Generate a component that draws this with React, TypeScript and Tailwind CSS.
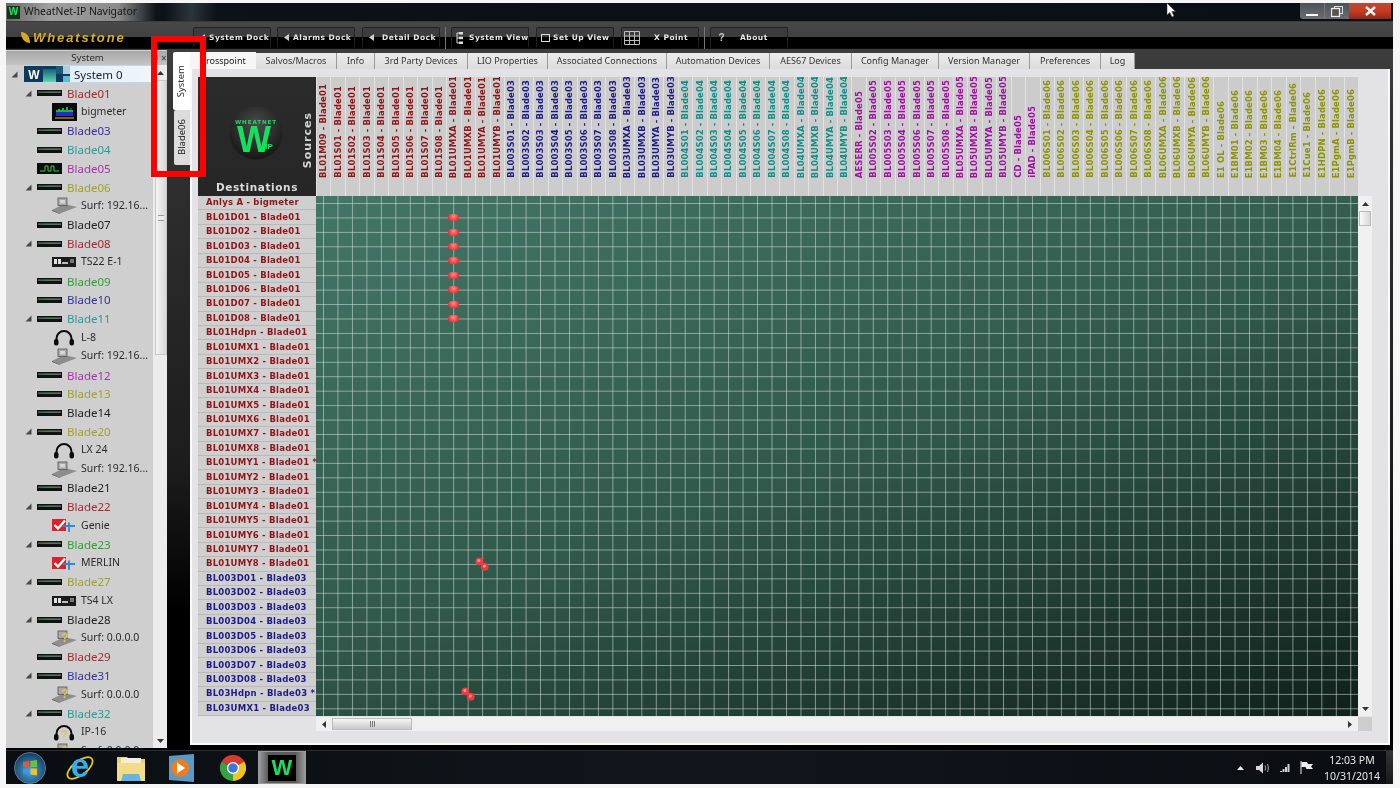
import React from "react";

const RED = "text-[#8f1418]";
const BLUE = "text-[#1c1a86]";
const TEAL = "text-[#0f8f88]";
const PURPLE = "text-[#a010a0]";
const OLIVE = "text-[#8c9400]";

const S8 = ["S01", "S02", "S03", "S04", "S05", "S06", "S07", "S08"];
const UM = ["UMXA", "UMXB", "UMYA", "UMYB"];
const sources: [string, string][] = [
  ["BL01M09 - Blade01", RED],
  ...S8.map((s): [string, string] => [`BL01${s} - Blade01`, RED]),
  ...UM.map((s): [string, string] => [`BL01${s} - Blade01`, RED]),
  ...S8.map((s): [string, string] => [`BL003${s} - Blade03`, BLUE]),
  ...UM.map((s): [string, string] => [`BL03${s} - Blade03`, BLUE]),
  ...S8.map((s): [string, string] => [`BL004${s} - Blade04`, TEAL]),
  ...UM.map((s): [string, string] => [`BL04${s} - Blade04`, TEAL]),
  ["AESERR - Blade05", PURPLE],
  ...["S02", "S03", "S04", "S06", "S07", "S08"].map((s): [string, string] => [`BL005${s} - Blade05`, PURPLE]),
  ...UM.map((s): [string, string] => [`BL05${s} - Blade05`, PURPLE]),
  ["CD - Blade05", PURPLE],
  ["iPAD - Blade05", PURPLE],
  ...S8.map((s): [string, string] => [`BL006${s} - Blade06`, OLIVE]),
  ...UM.map((s): [string, string] => [`BL06${s} - Blade06`, OLIVE]),
  ...["E1 OL", "E1BM01", "E1BM02", "E1BM03", "E1BM04", "E1CtrlRm", "E1Cue1", "E1HDPN", "E1PgmA", "E1PgmB"].map(
    (s): [string, string] => [`${s} - Blade06`, OLIVE]
  ),
];

const N8 = [1, 2, 3, 4, 5, 6, 7, 8];
const dests: [string, string][] = [
  ["Anlys A - bigmeter", RED],
  ...N8.map((n): [string, string] => [`BL01D0${n} - Blade01`, RED]),
  ["BL01Hdpn - Blade01", RED],
  ...N8.map((n): [string, string] => [`BL01UMX${n} - Blade01`, RED]),
  ...N8.map((n): [string, string] => [`BL01UMY${n} - Blade01${n === 1 ? " *" : ""}`, RED]),
  ...N8.map((n): [string, string] => [`BL003D0${n} - Blade03`, BLUE]),
  ["BL03Hdpn - Blade03 *", BLUE],
  ["BL03UMX1 - Blade03", BLUE],
];

type Ico = "bar" | "wave" | "meter" | "surf" | "ts" | "phones" | "genie" | "unk" | "unkphones";
type TreeRow = { label: string; color?: string; exp?: boolean; child?: boolean; icon: Ico };

const TR = "text-[#a32a2e]";
const TB = "text-[#35309c]";
const TT = "text-[#2a9a94]";
const TP = "text-[#a632a8]";
const TO = "text-[#a0a030]";
const TG = "text-[#2f9e34]";
const TK = "text-[#222222]";

const tree: TreeRow[] = [
  { label: "Blade01", color: TR, exp: true, icon: "bar" },
  { label: "bigmeter", child: true, icon: "meter" },
  { label: "Blade03", color: TB, icon: "bar" },
  { label: "Blade04", color: TT, icon: "bar" },
  { label: "Blade05", color: TP, icon: "wave" },
  { label: "Blade06", color: TO, exp: true, icon: "bar" },
  { label: "Surf: 192.16...", child: true, icon: "surf" },
  { label: "Blade07", color: TK, icon: "bar" },
  { label: "Blade08", color: TR, exp: true, icon: "bar" },
  { label: "TS22 E-1", child: true, icon: "ts" },
  { label: "Blade09", color: TG, icon: "bar" },
  { label: "Blade10", color: TB, icon: "bar" },
  { label: "Blade11", color: TT, exp: true, icon: "bar" },
  { label: "L-8", child: true, icon: "phones" },
  { label: "Surf: 192.16...", child: true, icon: "surf" },
  { label: "Blade12", color: TP, icon: "bar" },
  { label: "Blade13", color: TO, icon: "bar" },
  { label: "Blade14", color: TK, icon: "bar" },
  { label: "Blade20", color: TO, exp: true, icon: "bar" },
  { label: "LX 24", child: true, icon: "phones" },
  { label: "Surf: 192.16...", child: true, icon: "surf" },
  { label: "Blade21", color: TK, icon: "bar" },
  { label: "Blade22", color: TR, exp: true, icon: "bar" },
  { label: "Genie", child: true, icon: "genie" },
  { label: "Blade23", color: TG, exp: true, icon: "bar" },
  { label: "MERLIN", child: true, icon: "genie" },
  { label: "Blade27", color: TO, exp: true, icon: "bar" },
  { label: "TS4 LX", child: true, icon: "ts" },
  { label: "Blade28", color: TK, exp: true, icon: "bar" },
  { label: "Surf: 0.0.0.0", child: true, icon: "unk" },
  { label: "Blade29", color: TR, icon: "bar" },
  { label: "Blade31", color: TB, exp: true, icon: "bar" },
  { label: "Surf: 0.0.0.0", child: true, icon: "unk" },
  { label: "Blade32", color: TT, exp: true, icon: "bar" },
  { label: "IP-16", child: true, icon: "unkphones" },
  { label: "Surf: 0.0.0.0", child: true, icon: "unk" },
];

const Expander = () => (
  <svg width="7" height="7" viewBox="0 0 7 7" className="shrink-0">
    <polygon points="0.5,6.5 6.5,6.5 6.5,0.5" fill="#4a4a4a" />
  </svg>
);

function TreeIcon({ kind }: { kind: Ico }) {
  if (kind === "bar")
    return (
      <svg width="25" height="6" viewBox="0 0 25 6" className="shrink-0">
        <defs>
          <linearGradient id="barg" x1="0" x2="1" y1="0" y2="0">
            <stop offset="0" stopColor="#666" />
            <stop offset="0.5" stopColor="#4f9a68" />
            <stop offset="1" stopColor="#777" />
          </linearGradient>
        </defs>
        <rect x="0" y="0" width="25" height="6" fill="#111" />
        <rect x="1" y="1.5" width="23" height="1.3" fill="url(#barg)" />
      </svg>
    );
  if (kind === "wave")
    return (
      <svg width="25" height="11" viewBox="0 0 25 11" className="shrink-0">
        <rect width="25" height="11" fill="#0b0f0b" />
        <path d="M3 8H8V3H11V8H14V3H17V8H22" fill="none" stroke="#38c850" strokeWidth="1" />
      </svg>
    );
  if (kind === "meter")
    return (
      <svg width="25" height="18" viewBox="0 0 25 18" className="shrink-0">
        <rect width="25" height="18" fill="#0a0a0a" />
        <path d="M4 13V9L6 9V6L8 6V9H10V5H12V8H14V4H16V7H18V5H20V9H21V13Z" fill="#2a2ac8" />
        <path d="M4 9H21V7H16V4H14V7H12V5H10V7H8V6H6V7H4Z" fill="#22b040" />
        <rect x="3" y="14.5" width="19" height="1" fill="#d8c020" />
      </svg>
    );
  if (kind === "ts")
    return (
      <svg width="24" height="10" viewBox="0 0 24 10" className="shrink-0">
        <rect width="24" height="10" fill="#1b1b1b" />
        <rect x="2" y="2" width="3" height="5" fill="#e2e2e2" />
        <rect x="6" y="2" width="3" height="5" fill="#e2e2e2" />
        <rect x="10" y="5" width="6" height="2" fill="#bbb" />
        <rect x="18" y="2" width="4" height="4" fill="#777" />
      </svg>
    );
  if (kind === "phones" || kind === "unkphones")
    return (
      <svg width="24" height="17" viewBox="0 0 24 17" className="shrink-0">
        <path d="M4.5 12V9.5a7.5 7.5 0 0 1 15 0V12" fill="none" stroke="#0c0c0c" strokeWidth="2" />
        <rect x="2" y="10" width="4.5" height="6.5" rx="2" fill="#0c0c0c" />
        <rect x="17.5" y="10" width="4.5" height="6.5" rx="2" fill="#0c0c0c" />
        {kind === "unkphones" && (
          <text x="12" y="14" fontSize="11" fontWeight="700" fontFamily="Liberation Sans, sans-serif" textAnchor="middle" fill="#d8c84a">
            ?
          </text>
        )}
      </svg>
    );
  if (kind === "genie")
    return (
      <svg width="24" height="15" viewBox="0 0 24 15" className="shrink-0">
        <rect x="0" y="1" width="14" height="12" fill="#d8222c" />
        <path d="M2.5 7L6 10.5L13 2.5" fill="none" stroke="#fff" strokeWidth="2.4" />
        <path d="M11 8H23M17 4.5V14" stroke="#2c8ad0" strokeWidth="1.8" />
      </svg>
    );
  const unk = kind === "unk";
  return (
    <svg width="25" height="17" viewBox="0 0 25 17" className="shrink-0">
      <polygon points="0,13 12,7 25,10 8,16.5" fill="#8d8d8d" />
      <polygon points="0,13 8,16.5 8,17 0,14" fill="#555" />
      <rect x="6" y="1" width="9" height="7.5" fill="#a9a9a9" stroke="#555" strokeWidth="0.8" />
      {unk ? (
        <text x="13" y="12" fontSize="12" fontWeight="700" fontFamily="Liberation Sans, sans-serif" textAnchor="middle" fill="#d8c84a">
          ?
        </text>
      ) : (
        <rect x="8" y="3" width="5" height="3.5" fill="#d6d6d6" />
      )}
    </svg>
  );
}

function ToolBtn({ label, w, pl, icon }: { label: string; w: string; pl: string; icon: React.ReactNode }) {
  return (
    <div className={`h-[20px] shrink-0 rounded-t-[2px] border border-b-0 border-[#232323] bg-[linear-gradient(#3c3c3c_0%,#3c3c3c_50%,#000_50%)] flex items-center relative ${w}`}>
      <div className="w-[14px] ml-[1px] flex justify-center shrink-0">{icon}</div>
      <span className={`font-['DejaVu_Sans'] font-bold text-[7.5px] tracking-[0.5px] text-[#e6e6e6] whitespace-nowrap ${pl}`}>{label}</span>
    </div>
  );
}

const LeftTri = () => (
  <svg width="5" height="7" viewBox="0 0 5 7">
    <polygon points="0,3.5 5,0 5,7" fill="#cfcfcf" />
  </svg>
);

const tabs: [string, string][] = [
  ["Salvos/Macros", "w-[81px]"],
  ["Info", "w-[38px]"],
  ["3rd Party Devices", "w-[93px]"],
  ["LIO Properties", "w-[80px]"],
  ["Associated Connections", "w-[119px]"],
  ["Automation Devices", "w-[103px]"],
  ["AES67 Devices", "w-[82px]"],
  ["Config Manager", "w-[87px]"],
  ["Version Manager", "w-[91px]"],
  ["Preferences", "w-[71px]"],
  ["Log", "w-[34px]"],
];

const Pin = ({ cls }: { cls: string }) => (
  <div className={`h-[7px] w-[11px] rounded-full bg-[radial-gradient(circle_at_50%_35%,#ff9090,#f23a40_60%,#d8262e)] place-self-center ${cls}`} />
);

const PinDiag = ({ cls }: { cls: string }) => (
  <svg width="14" height="14" viewBox="0 0 14 14" className={`place-self-center ${cls}`}>
    <circle cx="4.3" cy="4.3" r="3.9" fill="#ee3a40" />
    <circle cx="9.7" cy="9.7" r="3.9" fill="#ee3a40" />
    <circle cx="3.9" cy="3.5" r="1.5" fill="#ff9a9a" />
    <circle cx="9.3" cy="8.9" r="1.5" fill="#ff9a9a" />
  </svg>
);

export default function App() {
  return (
    <div className="relative w-[1400px] h-[788px] overflow-hidden bg-[#f6f6f6] pl-[6px] pr-[7px] pt-[3px] pb-[4px] flex flex-col font-['Noto_Sans',sans-serif] blur-[0.35px]">
      {/* Title bar */}
      <div className="h-[18px] shrink-0 flex items-center bg-[linear-gradient(90deg,#0e1318,#0c1016_40%,#0a0f16)] relative">
        <div className="h-full w-[150px] flex items-center bg-[linear-gradient(90deg,#6a6a6a,#a0a0a0_30%,#8a8a8a_75%,#0e1318)]">
          <div className="w-[13px] h-[13px] ml-[1px] bg-[#17301f] flex items-center justify-center">
            <span className="text-[#22e060] text-[10px] font-bold leading-none font-['Liberation_Sans']">W</span>
          </div>
          <span className="ml-[4px] text-[10.4px] text-[#161616] whitespace-nowrap font-['Noto_Sans']">WheatNet-IP Navigator</span>
        </div>
        <div className="w-[50px] h-full ml-[10px] bg-[linear-gradient(90deg,#0e1318,#2c343c,#0e1318)]" />
        <div className="flex-1" />
        <div className="flex h-[17px] items-start self-start mr-[2px]">
          <div className="w-[24px] h-[16px] rounded-bl-[3px] bg-[linear-gradient(#4c5258,#6a6e72)] flex items-end justify-center pb-[3px]">
            <div className="w-[12px] h-[2.5px] bg-white" />
          </div>
          <div className="w-[25px] h-[16px] bg-[linear-gradient(#4c5258,#6a6e72)] flex items-center justify-center border-l border-[#777]">
            <svg width="12" height="11" viewBox="0 0 12 11">
              <rect x="3.5" y="0.5" width="8" height="7" fill="none" stroke="#ddd" />
              <rect x="0.5" y="2.5" width="8" height="8" fill="#555" stroke="#eee" strokeWidth="1.3" />
            </svg>
          </div>
          <div className="w-[42px] h-[16px] bg-[linear-gradient(#b84a38,#c83a20_50%,#8e2a1c)] flex items-center justify-center">
            <svg width="11" height="10" viewBox="0 0 11 10">
              <path d="M1 1L10 9M10 1L1 9" stroke="#f4f4f4" strokeWidth="2.4" />
            </svg>
          </div>
        </div>
      </div>

      {/* Toolbar */}
      <div className="h-[29px] shrink-0 bg-[linear-gradient(#303030_0%,#484848_4%,#414141_55%,#000_55%,#000_94%,#555_100%)] flex items-start pt-[6px]">
        <div className="w-[187px] shrink-0 flex items-center pl-[14px] pt-[1px]">
          <svg width="11" height="13" viewBox="0 0 11 13">
            <path d="M1 1C6 1 10 5 10 12C5 12 1 8 1 1Z" fill="#d8a820" />
          </svg>
          <span className="ml-[2px] text-[#d8ac28] italic font-bold text-[13px] tracking-[1.9px] font-['Liberation_Sans'] whitespace-nowrap">Wheatstone</span>
        </div>
        <div className="flex">
          <ToolBtn label="System Dock" w="w-[78px]" pl="ml-[0px]" icon={<LeftTri />} />
          <div className="w-[6px]" />
          <ToolBtn label="Alarms Dock" w="w-[78px]" pl="ml-[0px]" icon={<LeftTri />} />
          <div className="w-[7px]" />
          <ToolBtn label="Detail Dock" w="w-[78px]" pl="ml-[4px]" icon={<LeftTri />} />
          <div className="w-[11px] flex justify-center"><div className="w-[1px] h-[22px] bg-[#777]" /></div>
          <ToolBtn
            label="System View"
            w="w-[78px]"
            pl="ml-[2px]"
            icon={
              <svg width="8" height="12" viewBox="0 0 8 12">
                <path d="M3 1H1V11H3M1 6H3" fill="none" stroke="#ddd" />
                <rect x="3" y="0" width="4" height="2.5" fill="#ddd" />
                <rect x="3" y="4.7" width="4" height="2.5" fill="#ddd" />
                <rect x="3" y="9.5" width="4" height="2.5" fill="#ddd" />
              </svg>
            }
          />
          <div className="w-[7px]" />
          <ToolBtn
            label="Set Up View"
            w="w-[78px]"
            pl="ml-[1px]"
            icon={
              <svg width="9" height="8" viewBox="0 0 9 8">
                <rect x="0.5" y="0.5" width="8" height="7" fill="none" stroke="#ddd" />
              </svg>
            }
          />
          <div className="w-[7px]" />
          <ToolBtn
            label="X Point"
            w="w-[78px]"
            pl="ml-[17px]"
            icon={
              <svg width="16" height="14" viewBox="0 0 16 14" className="ml-[4px] shrink-0">
                <path d="M.5.5H15.5V13.5H.5ZM5.5.5V13.5M10.5.5V13.5M.5 5H15.5M.5 9.5H15.5" fill="none" stroke="#bdbdbd" />
              </svg>
            }
          />
          <div className="w-[11px] flex justify-center"><div className="w-[1px] h-[22px] bg-[#777]" /></div>
          <ToolBtn
            label="About"
            w="w-[78px]"
            pl="ml-[14px]"
            icon={<span className="text-[#ccc] text-[10px] font-bold leading-none ml-[5px] font-['Liberation_Sans']">?</span>}
          />
        </div>
      </div>

      {/* Main */}
      <div className="h-[700px] shrink-0 flex bg-[linear-gradient(#3e3e3e_0%,#333_8%,#1c1c1c_60%,#000_80%)]">
        {/* Left panel */}
        <div className="w-[161px] shrink-0 h-[698px] bg-[#cfcfcf] flex flex-col overflow-hidden">
          <div className="h-[14px] mt-[1px] shrink-0 bg-[linear-gradient(#a8a8a8,#c4c4c4)] flex items-center relative">
            <span className="w-[147px] pl-[16px] text-center text-[9.5px] text-[#2a2a2a]">System</span>
            <svg width="7" height="7" viewBox="0 0 7 7" className="-ml-[2px]">
              <rect x="1" y="0.5" width="5" height="4" fill="none" stroke="#444" />
              <path d="M3.5 5V7" stroke="#444" />
            </svg>
            <span className="ml-[3px] text-[10px] leading-none text-[#333]">×</span>
          </div>
          <div className="flex flex-1 min-h-0">
            <div className="w-[147px] shrink-0 overflow-hidden">
              <div className="h-[18.8px] flex items-center">
                <div className="ml-[5px] mr-[5px]"><Expander /></div>
                <div className="flex-1 h-[18px] flex items-center border border-[#bcd8ea] bg-[linear-gradient(90deg,#d8ecfa,#e8f2fa_60%,#eef5fb)]">
                  <svg width="46" height="16" viewBox="0 0 46 16" className="shrink-0">
                    <defs>
                      <linearGradient id="sg" x1="0" x2="0" y1="0" y2="1">
                        <stop offset="0" stopColor="#1a5f80" />
                        <stop offset="1" stopColor="#58d8a8" />
                      </linearGradient>
                    </defs>
                    <rect width="46" height="16" fill="#0d3a5c" />
                    <text x="10" y="12.5" fontSize="12" fontWeight="700" fontFamily="Liberation Sans, sans-serif" textAnchor="middle" fill="#fff">
                      W
                    </text>
                    <rect x="19" y="3" width="13" height="13" fill="url(#sg)" />
                    <rect x="32" y="0" width="7" height="8" fill="#1c5a78" />
                    <rect x="39" y="0" width="7" height="8" fill="#b0cede" />
                    <rect x="39" y="10" width="7" height="6" fill="#5cbcd4" />
                  </svg>
                  <span className="ml-[4px] text-[11.5px] text-[#222] whitespace-nowrap">System 0</span>
                </div>
              </div>
              {tree.map((r, i) => (
                <div key={i} className="h-[18.8px] flex items-center whitespace-nowrap">
                  {r.child ? (
                    <>
                      <div className="w-[46px] shrink-0" />
                      <div className="w-[24px] shrink-0 flex justify-center"><TreeIcon kind={r.icon} /></div>
                      <span className="ml-[5px] text-[10.5px] text-[#2a2a2a]">{r.label}</span>
                    </>
                  ) : (
                    <>
                      <div className="w-[19px] shrink-0" />
                      <div className="w-[8px] shrink-0">{r.exp && <Expander />}</div>
                      <div className="w-[4px] shrink-0" />
                      <TreeIcon kind={r.icon} />
                      <span className={`ml-[5px] text-[11.5px] ${r.color}`}>{r.label}</span>
                    </>
                  )}
                </div>
              ))}
            </div>
            <div className="w-[14px] shrink-0 bg-[#ececec] flex flex-col items-center">
              <div className="h-[15px] flex items-center">
                <svg width="7" height="4" viewBox="0 0 7 4"><polygon points="3.5,0 7,4 0,4" fill="#333" /></svg>
              </div>
              <div className="w-[12px] h-[275px] ml-[1px] bg-[linear-gradient(90deg,#f4f4f4,#d8d8d8)] border border-[#c8c8c8] flex items-center justify-center">
                <div className="w-[6px] h-[6px] border-y border-[#999] bg-[linear-gradient(#ececec_40%,#999_40%,#999_60%,#ececec_60%)]" />
              </div>
              <div className="flex-1" />
              <div className="h-[14px] flex items-center">
                <svg width="7" height="4" viewBox="0 0 7 4"><polygon points="3.5,4 7,0 0,0" fill="#333" /></svg>
              </div>
            </div>
          </div>
        </div>

        {/* Vertical doc tabs */}
        <div className="w-[23px] shrink-0 flex flex-col items-end pt-[2px]">
          <div className="h-[58px] w-[17px] bg-white rounded-l-[2px] flex items-center justify-center">
            <span className="[writing-mode:vertical-rl] rotate-180 text-[9.5px] text-[#333] whitespace-nowrap">System</span>
          </div>
          <div className="h-[55px] w-[16px] bg-[#dcdcdc] rounded-l-[2px] flex items-center justify-center">
            <span className="[writing-mode:vertical-rl] rotate-180 text-[9.5px] text-[#222] whitespace-nowrap">Blade06</span>
          </div>
        </div>

        {/* Content */}
        <div className="flex-1 min-w-0 flex flex-col pr-[3px] pb-[5px] pt-[2px]">
          <div className="flex h-[17px] shrink-0">
            <div className="w-[66px] h-[17px] bg-[#f6f6f6] flex items-center justify-center text-[9px] text-[#222]">Crosspoint</div>
            {tabs.map(([t, w]) => (
              <div key={t} className={`${w} h-[16px] mt-[1px] shrink-0 bg-[linear-gradient(#ececec,#dcdcdc)] border-r border-[#9a9a9a] flex items-center justify-center text-[9px] text-[#333] whitespace-nowrap`}>
                {t}
              </div>
            ))}
          </div>
          <div className="flex-1 bg-[#e3e3e6] border-x-2 border-b-2 border-[#fafafa] pl-[6px] pt-[8px] flex flex-col">
            {/* Header row */}
            <div className="flex h-[119px] shrink-0">
              <div className="w-[118px] shrink-0 bg-[linear-gradient(#2b2b2b,#262626)] flex flex-col">
                <div className="flex-1 flex min-h-0">
                  <div className="flex-1 flex items-center justify-center pt-[10px] pl-[14px]">
                    <svg width="54" height="54" viewBox="0 0 54 54">
                      <defs>
                        <radialGradient id="lg" cx="0.5" cy="0.35" r="0.7">
                          <stop offset="0" stopColor="#4c4c4c" />
                          <stop offset="1" stopColor="#131313" />
                        </radialGradient>
                      </defs>
                      <circle cx="27" cy="27" r="26.5" fill="url(#lg)" />
                      <text x="27" y="18" fontSize="5.6" fontWeight="700" letterSpacing="0.9" fontFamily="DejaVu Sans, sans-serif" textAnchor="middle" fill="#14e060">
                        WHEATNET
                      </text>
                      <text x="25" y="45.5" fontSize="36" fontWeight="700" fontFamily="Liberation Sans, sans-serif" textAnchor="middle" fill="#14e060">
                        W
                      </text>
                      <text x="40" y="43" fontSize="8" fontWeight="700" fontFamily="Liberation Sans, sans-serif" textAnchor="middle" fill="#14e060">
                        IP
                      </text>
                    </svg>
                  </div>
                  <div className="w-[16px] shrink-0 flex items-end justify-start pb-[11px]">
                    <span className="[writing-mode:vertical-rl] rotate-180 font-['DejaVu_Sans'] font-bold text-[11px] tracking-[1px] text-[#d4d4d4] whitespace-nowrap">Sources</span>
                  </div>
                </div>
                <div className="h-[17px] shrink-0 flex items-center justify-center font-['DejaVu_Sans'] font-bold text-[10.5px] tracking-[0.6px] text-[#dcdcdc]">Destinations</div>
              </div>
              <div className="w-[1042px] shrink-0 grid grid-cols-[repeat(72,minmax(0,1fr))] bg-[#cccccc]">
                {sources.map(([t, c], i) => (
                  <div key={i} className="overflow-hidden border-l border-[#e2e2e2] flex items-end justify-center pb-[18px]">
                    <span className={`[writing-mode:vertical-rl] rotate-180 whitespace-nowrap font-['DejaVu_Sans'] font-bold text-[8.5px] leading-[11px] tracking-[0.1px] ${c}`}>{t}</span>
                  </div>
                ))}
              </div>
            </div>

            {/* Body row */}
            <div className="flex h-[520px] shrink-0">
              <div className="w-[118px] shrink-0 grid grid-rows-[repeat(36,minmax(0,1fr))] bg-[#cfcfcf]">
                {dests.map(([t, c], i) => (
                  <div key={i} className={`border-b border-[#b9b9b9] pl-[8px] flex items-center whitespace-nowrap overflow-hidden font-['DejaVu_Sans'] font-bold text-[8.5px] tracking-[0.22px] ${c}`}>{t}</div>
                ))}
              </div>
              <div className="w-[1042px] shrink-0 grid grid-cols-[repeat(72,minmax(0,1fr))] grid-rows-[repeat(36,minmax(0,1fr))] [background-image:linear-gradient(90deg,rgba(215,228,222,0.55)_1px,transparent_1px),linear-gradient(rgba(215,228,222,0.55)_1px,transparent_1px),linear-gradient(160deg,#437666_0%,#31594b_50%,#10201b_100%)] [background-size:14.472px_14.444px,14.472px_14.444px,100%_100%] [background-position:7px_0,0_7px,0_0]">
                <Pin cls="col-start-10 row-start-2" />
                <Pin cls="col-start-10 row-start-3" />
                <Pin cls="col-start-10 row-start-4" />
                <Pin cls="col-start-10 row-start-5" />
                <Pin cls="col-start-10 row-start-6" />
                <Pin cls="col-start-10 row-start-7" />
                <Pin cls="col-start-10 row-start-8" />
                <Pin cls="col-start-10 row-start-9" />
                <PinDiag cls="col-start-12 row-start-[26]" />
                <PinDiag cls="col-start-11 row-start-[35]" />
              </div>
              <div className="w-[14px] shrink-0 bg-[#f0f0f0] flex flex-col items-center">
                <div className="h-[15px] flex items-center">
                  <svg width="7" height="4" viewBox="0 0 7 4"><polygon points="3.5,0 7,4 0,4" fill="#333" /></svg>
                </div>
                <div className="w-[12px] h-[15px] bg-[linear-gradient(90deg,#fafafa,#d6d6d6)] border border-[#bbb]" />
                <div className="flex-1" />
                <div className="h-[14px] flex items-center">
                  <svg width="7" height="4" viewBox="0 0 7 4"><polygon points="3.5,4 7,0 0,0" fill="#333" /></svg>
                </div>
              </div>
            </div>

            {/* Horizontal scrollbar */}
            <div className="flex h-[14px] mt-[1px] shrink-0">
              <div className="w-[118px] shrink-0" />
              <div className="w-[1042px] shrink-0 bg-[#f0f0f0] flex items-center">
                <div className="w-[16px] flex justify-center">
                  <svg width="4" height="7" viewBox="0 0 4 7"><polygon points="0,3.5 4,0 4,7" fill="#333" /></svg>
                </div>
                <div className="w-[80px] h-[12px] bg-[linear-gradient(#f6f6f6,#c8c8c8)] border border-[#bbb] flex items-center justify-center gap-[1px]">
                  <div className="w-[1px] h-[6px] bg-[#777]" />
                  <div className="w-[1px] h-[6px] bg-[#777]" />
                  <div className="w-[1px] h-[6px] bg-[#777]" />
                </div>
                <div className="flex-1" />
                <div className="w-[16px] flex justify-center">
                  <svg width="4" height="7" viewBox="0 0 4 7"><polygon points="4,3.5 0,0 0,7" fill="#333" /></svg>
                </div>
              </div>
              <div className="w-[14px] shrink-0 bg-[#cdcdcd]" />
            </div>
          </div>
        </div>
      </div>

      {/* Taskbar */}
      <div className="h-[34px] shrink-0 bg-[linear-gradient(90deg,#0a0e12,#11161c_50%,#0a0e13)] border-t border-[#2a2e33] flex items-center">
        <div className="w-[48px] flex justify-center">
          <svg width="32" height="32" viewBox="0 0 32 32">
            <defs>
              <radialGradient id="orb" cx="0.5" cy="0.6" r="0.6">
                <stop offset="0" stopColor="#4aa8dc" />
                <stop offset="1" stopColor="#123a60" />
              </radialGradient>
            </defs>
            <circle cx="16" cy="16" r="15.5" fill="url(#orb)" stroke="#7a8a98" strokeWidth="0.8" />
            <path d="M9 10L15 9V15H9Z" fill="#e05a30" />
            <path d="M16.5 9L23 8V15H16.5Z" fill="#70c040" />
            <path d="M9 16.5H15V22.5L9 21.5Z" fill="#3a98e0" />
            <path d="M16.5 16.5H23V23.5L16.5 22.5Z" fill="#f0c030" />
          </svg>
        </div>
        <div className="w-[52px] flex justify-center">
          <svg width="30" height="30" viewBox="0 0 30 30">
            <ellipse cx="15" cy="15" rx="15" ry="7" transform="rotate(-38 15 15)" fill="none" stroke="#e6c820" strokeWidth="1.8" />
            <text x="15" y="24" fontSize="33" fontWeight="700" fontFamily="Liberation Sans, sans-serif" textAnchor="middle" fill="#2eb0ec">
              e
            </text>
          </svg>
        </div>
        <div className="w-[50px] flex justify-center">
          <svg width="30" height="28" viewBox="0 0 30 28">
            <path d="M1 3H11L13 5H29V27H1Z" fill="#e8cf78" />
            <rect x="5" y="4" width="20" height="6" fill="#f4efd8" />
            <path d="M1 9H29V25Q29 27 27 27H3Q1 27 1 25Z" fill="#f2dc8c" />
            <path d="M7 20H23L25 27H5Z" fill="#6ab4e0" />
          </svg>
        </div>
        <div className="w-[51px] flex justify-center">
          <svg width="25" height="28" viewBox="0 0 25 28">
            <polygon points="0,2 25,0 25,28 0,26" fill="#5a9ac8" />
            <circle cx="11" cy="14" r="9" fill="#ee7d1e" />
            <polygon points="8,8.5 16,14 8,19.5" fill="#fff" />
          </svg>
        </div>
        <div className="w-[51px] flex justify-center">
          <svg width="26" height="26" viewBox="0 0 24 24">
            <path d="M12 12L1.6 6A12 12 0 0 1 22.4 6Z" fill="#d83a30" />
            <path d="M12 12L22.4 6A12 12 0 0 1 12 24Z" fill="#f2c420" />
            <path d="M12 12L12 24A12 12 0 0 1 1.6 6Z" fill="#3aa044" />
            <circle cx="12" cy="12" r="5.6" fill="#fff" />
            <circle cx="12" cy="12" r="4.4" fill="#3d78d8" />
          </svg>
        </div>
        <div className="w-[48px] h-[33px] bg-[linear-gradient(90deg,#9a9a9a,#5c5c5c_20%,#5c5c5c_80%,#9a9a9a)] border border-[#9a9a9a] flex items-center justify-center">
          <div className="w-[28px] h-[26px] bg-black flex items-center justify-center">
            <span className="text-[#14e060] text-[22px] font-bold leading-none font-['Liberation_Sans']">W</span>
          </div>
        </div>
        <div className="flex-1" />
        <div className="flex items-center">
          <svg width="7" height="4" viewBox="0 0 7 4"><polygon points="3.5,0 7,4 0,4" fill="#eee" /></svg>
          <svg width="15" height="12" viewBox="0 0 15 12" className="ml-[12px]">
            <path d="M0 4H3L7 0.5V11.5L3 8H0Z" fill="#d8d8d8" />
            <path d="M9 3.5Q10.5 6 9 8.5M11.5 2Q13.5 6 11.5 10" fill="none" stroke="#aaa" />
          </svg>
          <svg width="10" height="9" viewBox="0 0 10 9" className="ml-[9px]">
            <path d="M0 8H2V9H0ZM2.5 6H4.5V9H2.5ZM5 4H7V9H5ZM7.5 1H9.5V9H7.5Z" fill="#cfcfcf" />
          </svg>
          <svg width="13" height="13" viewBox="0 0 13 13" className="ml-[10px]">
            <path d="M1 0V13" stroke="#eee" />
            <path d="M1.5 1H7L8 3H13L11 5.5L13 8H6.5L5.5 6H1.5Z" fill="#eee" />
          </svg>
          <div className="w-[56px] ml-[11px] mr-[6px] text-center text-[10.5px] leading-[16px] text-[#e8e8e8] whitespace-nowrap">
            <div>12:03 PM</div>
            <div>10/31/2014</div>
          </div>
        </div>
        <div className="w-[7px] h-full bg-[linear-gradient(#333,#16191d)]" />
      </div>

      {/* Red annotation rectangle */}
      <div className="absolute left-[151px] top-[36px] w-[55px] h-[141px] border-[6px] border-[#ff0000]" />
      {/* Mouse pointer */}
      <svg width="10" height="15" viewBox="0 0 10 15" className="absolute left-[1166px] top-[3px]">
        <path d="M1 0V12L3.8 9.4L6 14L8 13L5.8 8.6H9.5Z" fill="#fff" stroke="#333" strokeWidth="0.5" />
      </svg>
    </div>
  );
}
